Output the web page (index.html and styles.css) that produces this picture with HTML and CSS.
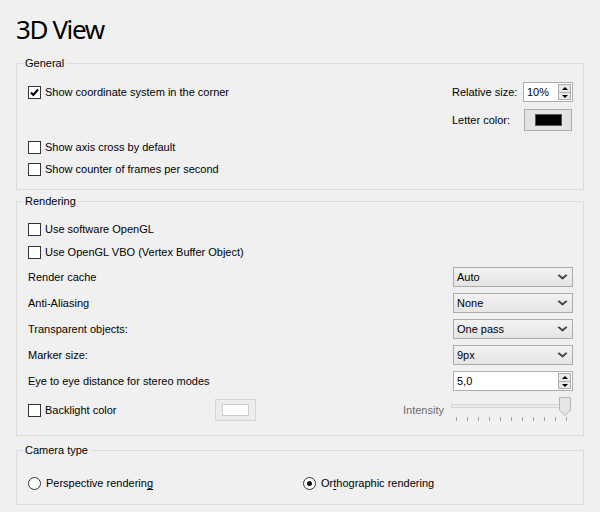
FILE: index.html
```html
<!DOCTYPE html>
<html>
<head>
<meta charset="utf-8">
<link rel="stylesheet" href="styles.css">
</head>
<body>
<div class="page">
  <h1 class="title">3D View</h1>

  <div class="group general">
    <span class="group-title">General</span>
    <div class="general-top">
      <label class="check-row"><span class="cb checked"><svg width="11" height="11" viewBox="0 0 11 11"><path d="M2 5.5 L4.3 8 L9 2.5" fill="none" stroke="#000" stroke-width="2"/></svg></span><span>Show coordinate system in the corner</span></label>
      <div class="side-grid">
        <span class="side-label">Relative size:</span>
        <div class="spin small"><span class="spin-val">10%</span><span class="spin-btns"><span class="sb up"></span><span class="sb down"></span></span></div>
        <span class="side-label">Letter color:</span>
        <div class="color-btn"><span class="swatch black"></span></div>
      </div>
    </div>
    <label class="check-row row18"><span class="cb"></span><span>Show axis cross by default</span></label>
    <label class="check-row row18 gap4"><span class="cb"></span><span>Show counter of frames per second</span></label>
  </div>

  <div class="group rendering">
    <span class="group-title">Rendering</span>
    <label class="check-row row18"><span class="cb"></span><span>Use software OpenGL</span></label>
    <label class="check-row row18 gap5"><span class="cb"></span><span>Use OpenGL VBO (Vertex Buffer Object)</span></label>
    <div class="opt-list">
      <div class="opt-row"><span>Render cache</span><div class="combo">Auto<span class="chev"></span></div></div>
      <div class="opt-row"><span>Anti-Aliasing</span><div class="combo">None<span class="chev"></span></div></div>
      <div class="opt-row"><span>Transparent objects:</span><div class="combo">One pass<span class="chev"></span></div></div>
      <div class="opt-row"><span>Marker size:</span><div class="combo">9px<span class="chev"></span></div></div>
      <div class="opt-row"><span>Eye to eye distance for stereo modes</span><div class="spin wide"><span class="spin-val">5,0</span><span class="spin-btns"><span class="sb up"></span><span class="sb down"></span></span></div></div>
    </div>
    <div class="backlight-row">
      <label class="check-row bl-check"><span class="cb"></span><span>Backlight color</span></label>
      <div class="color-btn disabled"><span class="swatch white"></span></div>
      <span class="intensity">Intensity</span>
      <div class="slider">
        <div class="groove"></div>
        <svg class="handle" width="12" height="19" viewBox="0 0 12 19"><path d="M0.5 0.5 H11.5 V13 L6 18.5 L0.5 13 Z" fill="#e6e6e6" stroke="#b5b5b5"/></svg>
        <div class="ticks">
          <i></i><i></i><i></i><i></i><i></i><i></i><i></i><i></i><i></i><i></i><i></i>
        </div>
      </div>
    </div>
  </div>

  <div class="group camera">
    <span class="group-title">Camera type</span>
    <div class="radio-row">
      <label class="radio-item first"><span class="rb"></span><span>Perspective renderin<u>g</u></span></label>
      <label class="radio-item"><span class="rb on"></span><span>Or<u>t</u>hographic rendering</span></label>
    </div>
  </div>
</div>
</body>
</html>
```

FILE: styles.css
```css
* { box-sizing: border-box; }
html, body { margin: 0; padding: 0; }
body {
  background: #f0f0f0;
  font-family: "Liberation Sans", Arial, sans-serif;
  font-size: 11px;
  color: #000;
  width: 600px;
  height: 512px;
  overflow: hidden;
}
.page { padding: 0 16px 0 16px; }
.title {
  font-family: "Noto Sans", sans-serif;
  font-weight: normal;
  font-size: 26px;
  letter-spacing: -1.4px;
  line-height: 30px;
  margin: 0;
  padding: 14px 0 0 0;
  height: 63px;
}
.group {
  position: relative;
  border: 1px solid #dcdcdc;
  padding-left: 11px;
  padding-right: 10px;
}
.group-title {
  position: absolute;
  top: -9px;
  left: 6px;
  padding: 0 2px;
  background: #f0f0f0;
  line-height: 16px;
}
.general { padding-top: 18px; padding-bottom: 11px; height: 127px; }
.rendering { margin-top: 11px; padding-top: 18px; height: 235px; }
.camera { margin-top: 14px; padding-top: 24px; height: 55px; }

.general-top { display: flex; justify-content: space-between; align-items: flex-start; height: 49px; margin-bottom: 7px; }
.general-top .check-row { height: 20px; }
.side-grid {
  display: grid;
  grid-template-columns: 71px 50px;
  grid-template-rows: 20px 22px;
  row-gap: 7px;
  align-items: center;
}
.check-row { display: flex; align-items: center; gap: 4px; }
.row18 { height: 18px; }
.gap4 { margin-top: 4px; }
.gap5 { margin-top: 5px; }

.cb {
  width: 13px; height: 13px;
  border: 1px solid #333;
  background: #fff;
  display: flex; align-items: center; justify-content: center;
  flex: none;
}
.spin {
  height: 20px;
  border: 1px solid #acacac;
  background: #fff;
  display: flex; align-items: center; justify-content: space-between;
  padding: 0 1px 0 3px;
}
.spin.small { width: 50px; }
.spin.wide { width: 120px; }
.spin-btns { display: flex; flex-direction: column; width: 13px; height: 16px; border: 1px solid #adadad; }
.sb { flex: 1; background: #e9e9e9; position: relative; }
.sb.up { border-bottom: 1px solid #adadad; }
.sb::after {
  content: ""; position: absolute; left: 2.5px;
  border-left: 3.5px solid transparent; border-right: 3.5px solid transparent;
}
.sb.up::after { top: 2px; border-bottom: 3px solid #000; }
.sb.down::after { top: 2px; border-top: 3px solid #000; }

.color-btn {
  width: 48px; height: 22px;
  border: 1px solid #adadad;
  background: #e3e3e3;
  display: flex; align-items: center; justify-content: center;
  margin-left: 1px;
}
.swatch { width: 27px; height: 12px; border: 1px solid #808080; }
.swatch.black { background: #000; border-color: #555; }
.color-btn.disabled { width: 41px; background: #ececec; border-color: #d5d5d5; margin-left: 0; }
.swatch.white { background: #fff; border-color: #cdcdcd; width: 27px; height: 12px; }

.opt-list { display: flex; flex-direction: column; gap: 6px; margin-top: 6px; }
.opt-row { display: flex; justify-content: space-between; align-items: center; height: 20px; }
.combo {
  width: 120px; height: 20px;
  border: 1px solid #acacac;
  background: linear-gradient(#f2f2f2, #e5e5e5);
  padding-left: 3px;
  line-height: 18px;
  position: relative;
}
.chev {
  position: absolute; right: 6px;
  width: 7px; height: 7px;
  border-right: 2px solid #444;
  border-bottom: 2px solid #444;
  transform: scale(1, 0.8) rotate(45deg);
  transform-origin: center;
  top: 4px;
}

.backlight-row { display: flex; align-items: center; height: 22px; margin-top: 8px; }
.bl-check { width: 187px; }
.intensity { color: #6d6d6d; margin-left: 147px; width: 48px; }
.slider { position: relative; width: 120px; height: 22px; }
.groove { position: absolute; left: 0; top: 5px; width: 116px; height: 4px; background: #e7eaea; border: 1px solid #d6d6d6; }
.handle { position: absolute; left: 108px; top: -2px; }
.ticks { position: absolute; left: 5px; top: 18px; display: flex; gap: 10px; }
.ticks i { display: block; width: 1px; height: 4px; background: #a0a0a0; }

.radio-row { display: flex; height: 16px; align-items: center; }
.radio-item { display: flex; align-items: center; gap: 5px; }
.radio-item.first { width: 275px; }
.rb { width: 13px; height: 13px; border: 1px solid #333; border-radius: 50%; background: #fff; position: relative; flex: none; }
.rb.on::after { content: ""; position: absolute; left: 3px; top: 3px; width: 5px; height: 5px; border-radius: 50%; background: #111; }
u { text-decoration-thickness: 1px; text-underline-offset: 2px; }
```
